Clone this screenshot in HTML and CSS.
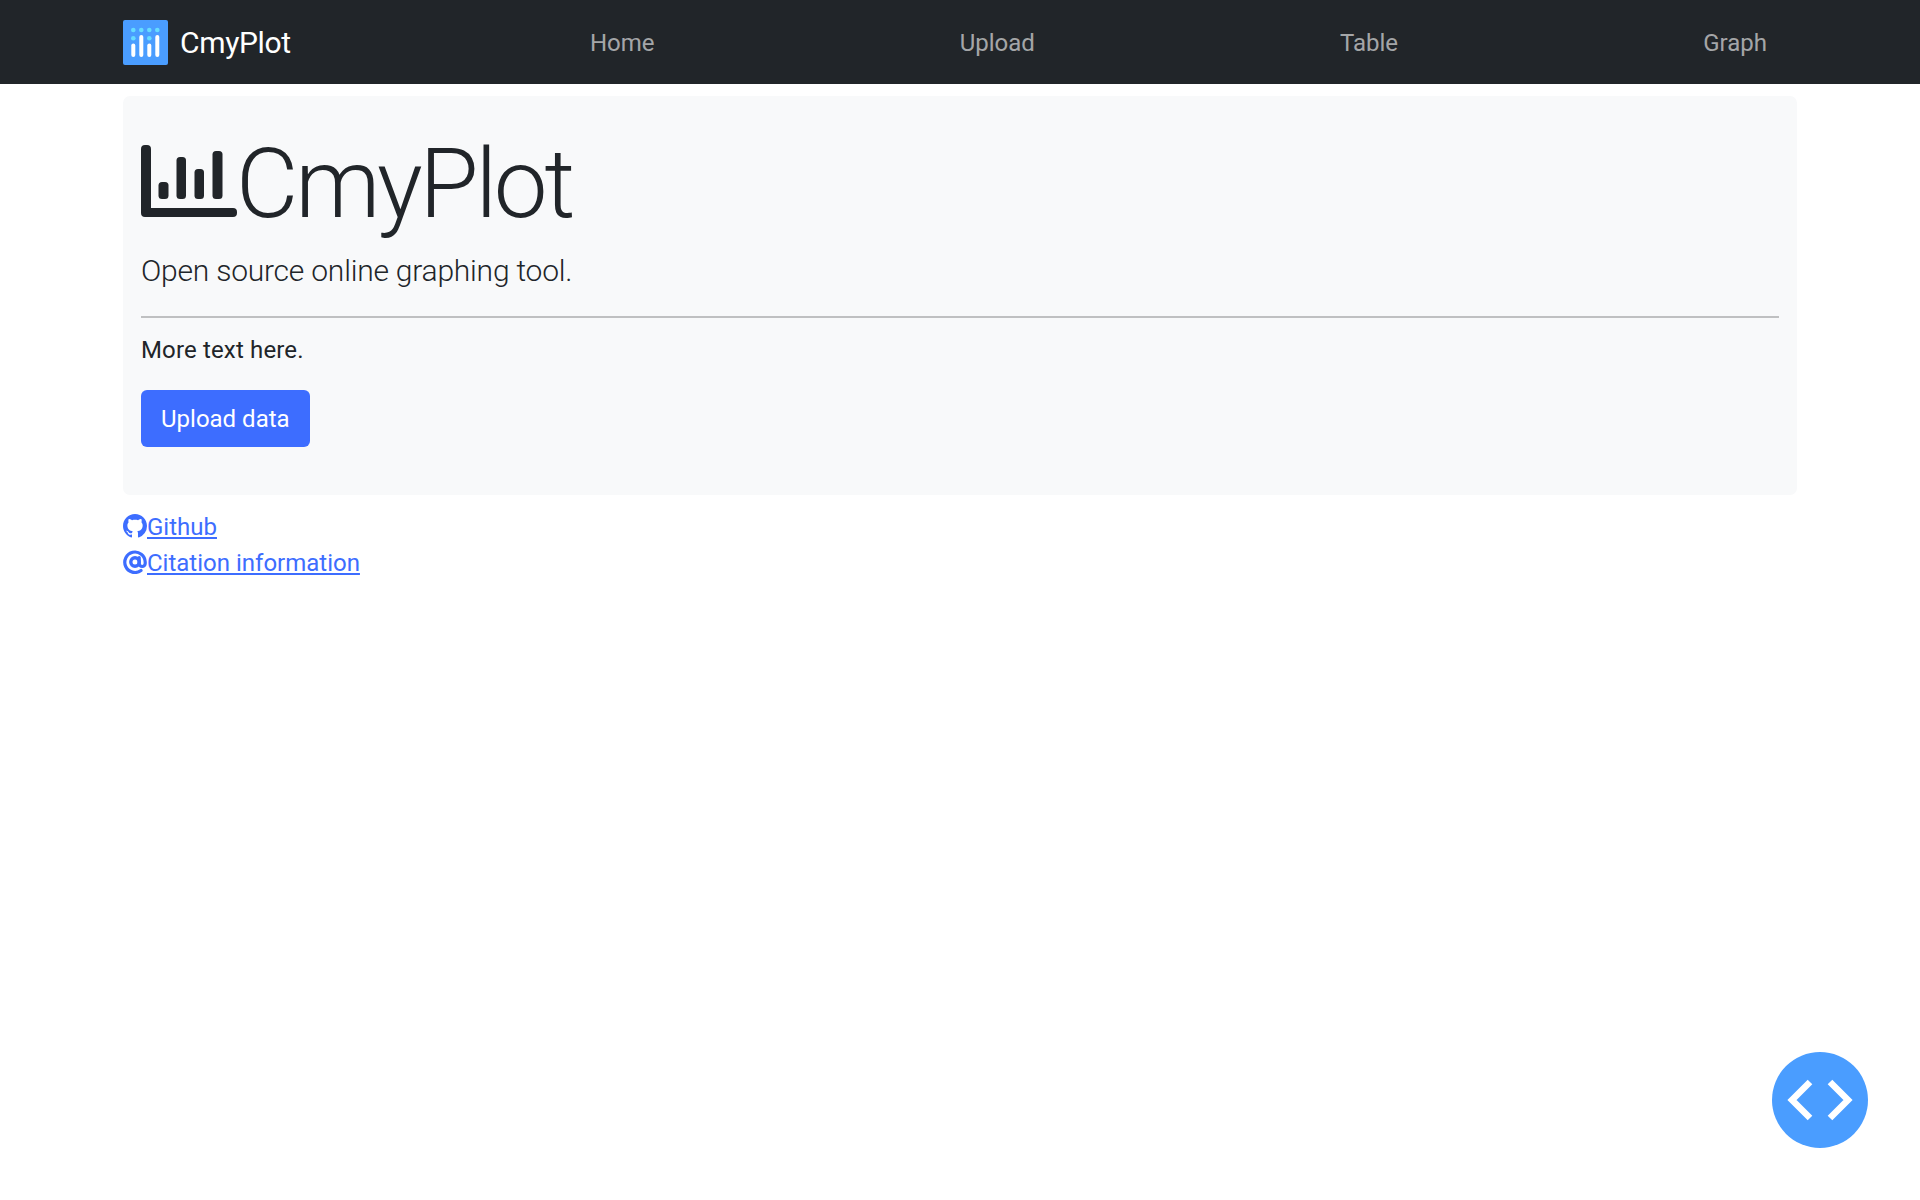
FILE: index.html
```html
<!DOCTYPE html>
<html lang="en">
<head>
<meta charset="utf-8">
<title>CmyPlot</title>
<link rel="stylesheet" href="styles.css">
</head>
<body>
<nav class="navbar">
  <div class="nav-inner">
    <a class="brand" href="#">
      <svg class="brand-logo" viewBox="0 0 45 45" aria-hidden="true">
        <rect width="45" height="45" rx="2" fill="#4a9dff"/>
        <g fill="#66dcff">
          <circle cx="10.3" cy="10" r="2.3"/><circle cx="18.3" cy="10" r="2.3"/><circle cx="26.3" cy="10" r="2.3"/><circle cx="34.3" cy="10" r="2.3"/>
          <circle cx="10.3" cy="18.3" r="2.3"/><circle cx="26.3" cy="18.3" r="2.3"/>
        </g>
        <g fill="#fff">
          <rect x="8.3" y="23.5" width="4" height="13.5" rx="2"/>
          <rect x="16.3" y="15" width="4" height="22" rx="2"/>
          <rect x="24.3" y="23.5" width="4" height="13.5" rx="2"/>
          <rect x="32.3" y="15" width="4" height="22" rx="2"/>
        </g>
      </svg>
      <span class="brand-name">CmyPlot</span>
    </a>
    <ul class="nav-links">
      <li><a href="#">Home</a></li>
      <li><a href="#">Upload</a></li>
      <li><a href="#">Table</a></li>
      <li><a href="#">Graph</a></li>
    </ul>
  </div>
</nav>
<main class="container">
  <section class="jumbotron">
    <h1 class="display">
      <svg class="chart-icon" viewBox="0 0 96 72" aria-hidden="true">
        <path fill="currentColor" d="M4 0h2a4 4 0 0 1 4 4v59h82a4 4 0 0 1 4 4v1a4 4 0 0 1-4 4H4a4 4 0 0 1-4-4V4a4 4 0 0 1 4-4z"/>
        <rect x="17.5" y="37" width="10" height="17" rx="3.500" fill="currentColor"/>
        <rect x="35.500" y="12" width="9.500" height="42" rx="3.500" fill="currentColor"/>
        <rect x="53.500" y="24" width="9.500" height="30" rx="3.500" fill="currentColor"/>
        <rect x="71.500" y="6" width="10" height="48" rx="3.500" fill="currentColor"/>
      </svg><span class="display-text">CmyPlot</span>
    </h1>
    <p class="lead">Open source online graphing tool.</p>
    <hr class="rule">
    <p class="body-text">More text here.</p>
    <a class="btn" href="#">Upload data</a>
  </section>
  <div class="links">
    <div class="link-row">
      <svg class="link-icon" viewBox="0 0 16 16" aria-hidden="true">
        <path fill="currentColor" d="M8 0C3.58 0 0 3.58 0 8c0 3.54 2.29 6.53 5.47 7.59.4.07.55-.17.55-.38 0-.19-.01-.82-.01-1.49-2.01.37-2.53-.49-2.69-.94-.09-.23-.48-.94-.82-1.13-.28-.15-.68-.52-.01-.53.63-.01 1.08.58 1.23.82.72 1.21 1.87.87 2.33.66.07-.52.28-.87.51-1.07-1.78-.2-3.64-.89-3.64-3.95 0-.87.31-1.59.82-2.15-.08-.2-.36-1.02.08-2.12 0 0 .67-.21 2.2.82.64-.18 1.32-.27 2-.27s1.36.09 2 .27c1.53-1.04 2.2-.82 2.2-.82.44 1.1.16 1.92.08 2.12.51.56.82 1.27.82 2.15 0 3.07-1.87 3.75-3.65 3.95.29.25.54.73.54 1.48 0 1.07-.01 1.93-.01 2.2 0 .21.15.46.55.38A8.01 8.01 0 0 0 16 8c0-4.42-3.58-8-8-8z"/>
      </svg><a href="#">Github</a>
    </div>
    <div class="link-row">
      <svg class="link-icon" viewBox="0 0 24 24" aria-hidden="true">
        <circle cx="12" cy="12" r="4.200" fill="none" stroke="currentColor" stroke-width="3.400"/>
        <path fill="none" stroke="currentColor" stroke-width="3.200" stroke-linecap="round" d="M16.200 7.500v6a3 3 0 0 0 6 0V12A10.200 10.200 0 1 0 18 20.500"/>
      </svg><a href="#">Citation information</a>
    </div>
  </div>
</main>
<button class="fab" type="button" aria-label="Toggle code">
  <svg viewBox="0 0 96 96" aria-hidden="true">
    <path fill="none" stroke="#fff" stroke-width="6.500" stroke-linecap="butt" d="M38 30 20 48l18 18M58 30l18 18-18 18"/>
  </svg>
</button>
</body>
</html>
```
FILE: styles.css
```css
* { box-sizing: border-box; }
html, body { margin: 0; padding: 0; }
body {
  font-family: Roboto, "Noto Sans", "Liberation Sans", sans-serif;
  font-size: 24px;
  line-height: 36px;
  color: #212529;
  background: #fff;
}
.navbar {
  background: #212529;
  height: 84px;
}
.nav-inner {
  width: 1674px;
  margin: 0 auto;
  height: 100%;
  display: flex;
  align-items: center;
}
.brand {
  display: flex;
  align-items: center;
  gap: 12px;
  color: #fff;
  text-decoration: none;
  font-size: 30px;
  width: 400px;
}
.brand-logo { width: 45px; height: 45px; display: block; }
.brand-name { letter-spacing: -0.35px; padding-top: 2px; }
.nav-links {
  list-style: none;
  margin: 0;
  flex: 1;
  display: flex;
  justify-content: space-between;
  padding: 2px 30px 0 67px;
}
.nav-links a {
  color: rgba(255,255,255,.6);
  text-decoration: none;
}
.container {
  width: 1674px;
  margin: 0 auto;
  padding-top: 12px;
}
.jumbotron {
  background: #f8f9fa;
  border-radius: 7px;
  height: 399px;
  padding: 27px 18px 18px;
}
.display {
  margin: 0;
  font-size: 96px;
  line-height: 115px;
  font-weight: 300;
  display: flex;
  align-items: flex-start;
}
.display-text { letter-spacing: -3.2px; padding-top: 4px; margin-left: -1px; }
.chart-icon { width: 96px; height: 72px; display: block; margin-top: 22px; }
.lead {
  margin: 6px 0 0;
  font-size: 30px;
  line-height: 45px;
  font-weight: 300;
  letter-spacing: -0.22px;
}
.rule {
  border: 0;
  height: 2px;
  background: #bfc0c1;
  margin: 23px 0 0;
}
.body-text { margin: 14px 0 0; letter-spacing: 0.15px; }
.btn {
  display: inline-block;
  margin-top: 22px;
  background: #3d6dff;
  color: #fff;
  text-decoration: none;
  border-radius: 6px;
  padding: 11px 20px 10px;
  height: 57px;
}
.links { padding-top: 14px; }
.link-row { display: flex; align-items: center; height: 36px; }
.link-row a { color: #3d6dff; }
.link-icon { width: 24px; height: 24px; color: #3d6dff; display: block; margin-top: -2px; }
.fab {
  position: fixed;
  right: 52px;
  bottom: 52px;
  width: 96px;
  height: 96px;
  border: 0;
  padding: 0;
  border-radius: 50%;
  background: #4a9dff;
}
.fab svg { width: 96px; height: 96px; display: block; }
```
